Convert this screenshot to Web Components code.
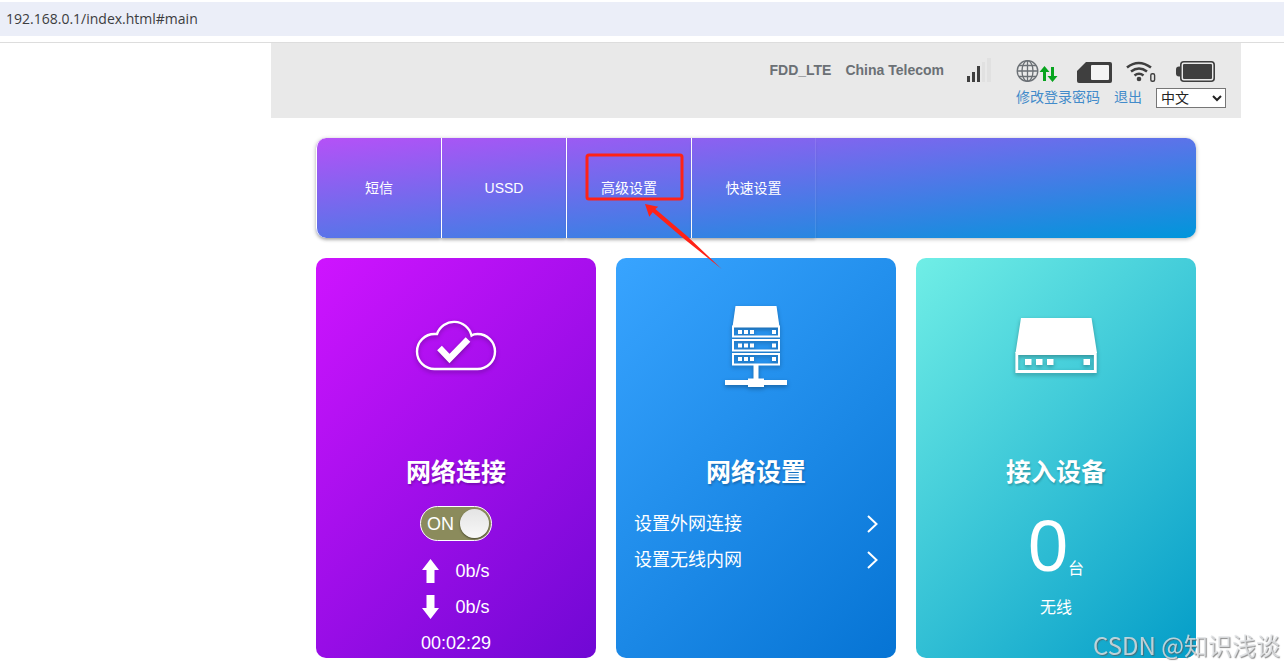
<!DOCTYPE html>
<html lang="zh-CN">
<head>
<meta charset="utf-8">
<title>4G Router</title>
<style>
  body {
    margin: 0;
    background: #fff;
    font-family: "Liberation Sans", "Noto Sans CJK SC", sans-serif;
    font-size: 14px;
  }

  main {
    max-width: 970px;
    margin: 0 43px 0 auto;
  }

  .content {
    display: flex;
    flex-direction: column;
    gap: 20px;
    padding: 20px 45px 0;
  }

  .cards {
    display: flex;
    gap: 20px;
  }
</style>
</head>
<body>
  <address-bar url="192.168.0.1/index.html#main"></address-bar>
  <main>
    <status-header network="FDD_LTE" provider="China Telecom"></status-header>
    <div class="content">
      <main-nav>
        <nav-tile href="#sms">短信</nav-tile>
        <nav-tile href="#ussd">USSD</nav-tile>
        <nav-tile href="#advanced" marked>高级设置</nav-tile>
        <nav-tile href="#quick">快速设置</nav-tile>
      </main-nav>
      <div class="cards">
        <home-card icon="cloud" style="--from: #cf14ff; --to: #7008d4">
          <span slot="title">网络连接</span>
          <connection-info up="0b/s" down="0b/s" time="00:02:29"></connection-info>
        </home-card>
        <home-card icon="server" style="--from: #38a4ff; --to: #0674d4">
          <span slot="title">网络设置</span>
          <card-link href="#dial">设置外网连接</card-link>
          <card-link href="#wifi">设置无线内网</card-link>
        </home-card>
        <home-card icon="device" style="--from: #70eee6; --to: #049dc8">
          <span slot="title">接入设备</span>
          <device-count count="0" unit="台">无线</device-count>
        </home-card>
      </div>
    </div>
  </main>
  <water-mark>CSDN @知识浅谈</water-mark>

<script>
const icons = {
  cloud: `
    <path d="M28.500 71a17.500 17.500 0 0 1 0-35h2.500a18 18 0 0 1 34.500 1.500q2-1.500 6-1.500a17.500 17.500 0 1 1 0 35z" fill="none" stroke="#fff" stroke-width="2.400"/>
    <path d="M33.500 50l10 10.500 18.500-19" fill="none" stroke="#fff" stroke-width="6.500"/>`,
  server: `
    <g transform="translate(-1 0)">
      <path d="M30.500 8h41l3 21H27.500z" fill="#fff"/>
      <g fill="none" stroke="#fff" stroke-width="2">
        <path d="M28 28.500h46v10H28zM28 42h46v10.500H28zM28 56h46v10.500H28z"/>
      </g>
      <g fill="#fff">
        <path d="M33 32h4v4h-4zM39 32h4v4h-4zM45 32h4v4h-4zM67 32h4v4h-4z"/>
        <path d="M33 45.500h4v4h-4zM39 45.500h4v4h-4zM45 45.500h4v4h-4zM67 45.500h4v4h-4z"/>
        <path d="M33 59h4v4h-4zM39 59h4v4h-4zM45 59h4v4h-4zM67 59h4v4h-4z"/>
        <path d="M48.500 67h5v14h-5zM20 82h62v5H20zM43 80.500h16v8.500H43z"/>
      </g>
    </g>`,
  device: `
    <path d="M15 20h70.500l5.500 35H9.500z" fill="#fff"/>
    <path d="M10.800 55.500h78.500v18H10.800z" fill="none" stroke="#fff" stroke-width="2.800"/>
    <path d="M19 61h6.500v6H19zM30 61h6.500v6H30zM41 61h6.500v6H41zM77.500 61h6.500v6h-6.500z" fill="#fff"/>`
}

window.customElements.define('address-bar', class extends HTMLElement {
  constructor() {
    super()
    this.attachShadow({mode:"open"})
    this.shadowRoot.innerHTML = `
      <style>
        :host {
          display: block;
          padding: 2px 0 6px;
          border-bottom: 1px solid #ddd;
        }

        input {
          display: block;
          box-sizing: border-box;
          width: 100%;
          height: 34px;
          margin: 0;
          padding: 0 6px 2px;
          border: 0;
          background: #ebeef8;
          color: #3c3d40;
          font: 14px "Open Sans", sans-serif;
        }
      </style>
      <input type="text" aria-label="URL">
    `
    this.shadowRoot.querySelector("input").value = this.getAttribute('url')
  }
})

window.customElements.define('status-header', class extends HTMLElement {
  constructor() {
    super()
    this.attachShadow({mode:"open"})
    this.shadowRoot.innerHTML = `
      <style>
        :host {
          display: flex;
          flex-direction: column;
          align-items: flex-end;
          gap: 5px;
          box-sizing: border-box;
          min-height: 75px;
          padding: 14px 15px 10px;
          background: #e9e9e9;
        }

        div {
          display: flex;
          gap: 14px;
          line-height: 18px;
        }

        .status {
          align-items: center;
          padding-right: 11px;
          color: #6b7075;
          font-weight: bold;
        }

        svg {
          display: block;
        }

        a {
          color: #428bca;
          text-decoration: none;
        }

        select {
          box-sizing: border-box;
          width: 70px;
          height: 20px;
          padding: 0;
          border: 1px solid #767676;
          background: #fff;
          color: #222;
          font: inherit;
        }
      </style>
      <div class="status">
        <span>${this.getAttribute('network')}</span>
        <span>${this.getAttribute('provider')}</span>
        <svg width="44" height="26" viewBox="0 0 44 26">
          <path d="M9 19h3v6H9zM14 15h3v10h-3zM19 9h3v16h-3z" fill="#3f3f3f"/>
          <path d="M24 5h3v20h-3zM29 1h4v24h-4z" fill="#e1e1e1"/>
        </svg>
        <svg width="47" height="26" viewBox="0 0 47 26">
          <g fill="none" stroke="#6b7075" stroke-width="1.300">
            <circle cx="11.500" cy="14" r="10.300"/>
            <ellipse cx="11.500" cy="14" rx="5.500" ry="10.300"/>
            <path d="M11.500 4v20M1 14h21M3 8.500h17M3 19.500h17"/>
          </g>
          <path d="M28.500 9l5 6h-3.500v9h-3v-9h-3.500zM36.500 25l-5-6h3.500v-9h3v9h3.500z" fill="#07a41e"/>
        </svg>
        <svg width="35" height="26" viewBox="0 0 35 26">
          <path d="M9 5h24q2 0 2 2v17q0 2-2 2H2q-2 0-2-2V14z" fill="#3f3f3f"/>
          <rect x="14" y="8" width="18" height="15" rx="1" fill="#f4f4f4"/>
        </svg>
        <svg width="36" height="26" viewBox="0 0 36 26">
          <g fill="none" stroke="#3f3f3f" stroke-width="2.600">
            <path d="M1 10.500q11.500-9 24 0M5 14.500q8-6 16 0M8.500 18.500q4.500-3.500 9 0"/>
          </g>
          <circle cx="13" cy="22" r="2.300" fill="#3f3f3f"/>
          <rect x="24.800" y="16.800" width="3.800" height="7.400" rx="1.500" fill="none" stroke="#3f3f3f" stroke-width="1.400"/>
        </svg>
        <svg width="39" height="26" viewBox="0 0 39 26">
          <rect x="4.800" y="4.800" width="33.400" height="19.400" rx="3" fill="none" stroke="#3f3f3f" stroke-width="1.600"/>
          <rect x="7" y="7" width="29" height="15" rx="1" fill="#3f3f3f"/>
          <path d="M4.500 9.500v10H3q-3 0-3-3v-4q0-3 3-3z" fill="#3f3f3f"/>
        </svg>
      </div>
      <div>
        <a href="#password">修改登录密码</a>
        <a href="#logout">退出</a>
        <select aria-label="语言"><option>中文</option></select>
      </div>
    `
  }
})

window.customElements.define('main-nav', class extends HTMLElement {
  constructor() {
    super()
    this.attachShadow({mode:"open"})
    this.shadowRoot.innerHTML = `
      <style>
        :host {
          display: block;
          border-radius: 10px;
          background: linear-gradient(to bottom right, #b551f7, #0096db);
          box-shadow: 0 1px 4px rgba(0, 0, 0, .3);
        }

        nav {
          display: flex;
        }
      </style>
      <nav><slot></slot></nav>
    `
  }
})

window.customElements.define('nav-tile', class extends HTMLElement {
  constructor() {
    super()
    this.attachShadow({mode:"open"})
    this.shadowRoot.innerHTML = `
      <style>
        :host {
          display: block;
          position: relative;
          box-sizing: border-box;
          width: 125px;
          border-left: 1px solid #fff;
          box-shadow: 0 3px 3px -1px rgba(0, 0, 0, .15);
        }

        :host(:first-child) {
          border-radius: 10px 0 0 10px;
        }

        :host(:last-child) a {
          border-right: 1px solid rgba(255, 255, 255, .1);
        }

        a {
          display: block;
          color: #fff;
          line-height: 100px;
          text-align: center;
          text-decoration: none;
        }

        svg {
          display: none;
          position: absolute;
          top: 12px;
          left: 16px;
          pointer-events: none;
        }

        :host([marked]) {
          z-index: 1;
        }

        :host([marked]) svg {
          display: block;
        }
      </style>
      <a href="${this.getAttribute('href')}"><slot></slot></a>
      <svg width="140" height="120" viewBox="0 0 140 120">
        <rect x="4" y="5" width="95" height="44" rx="2" fill="none" stroke="#ff2216" stroke-width="3"/>
        <path d="M62 54l13.300 2.700-3 2.300L104 86l34.700 33L100 88 69.700 62.300l-3.400 4.400z" fill="#ff2216"/>
      </svg>
    `
  }
})

window.customElements.define('home-card', class extends HTMLElement {
  constructor() {
    super()
    this.attachShadow({mode:"open"})
    this.shadowRoot.innerHTML = `
      <style>
        :host {
          display: flex;
          flex: 1;
          flex-direction: column;
          box-sizing: border-box;
          min-height: 400px;
          padding-top: 40px;
          border-radius: 10px;
          background: linear-gradient(135deg, var(--from), var(--to));
          color: #fff;
        }

        svg {
          align-self: center;
          filter: drop-shadow(0 2px 2px rgba(0, 0, 0, .3));
        }

        h2 {
          margin: 57px 0 17px;
          font-size: 25px;
          line-height: 34px;
          text-align: center;
          text-shadow: 1px 2px 2px rgba(0, 0, 0, .2);
        }
      </style>
      <svg width="100" height="100" viewBox="0 0 100 100">${icons[this.getAttribute('icon')]}</svg>
      <h2><slot name="title"></slot></h2>
      <slot></slot>
    `
  }
})

window.customElements.define('connection-info', class extends HTMLElement {
  constructor() {
    super()
    this.attachShadow({mode:"open"})
    this.shadowRoot.innerHTML = `
      <style>
        :host {
          display: flex;
          flex-direction: column;
          align-items: center;
          gap: 8px;
          font-size: 18px;
          line-height: 28px;
        }

        label {
          display: flex;
          align-items: center;
          justify-content: space-between;
          box-sizing: border-box;
          width: 72px;
          height: 35px;
          margin-bottom: 8px;
          padding: 0 2px 0 6px;
          border: 1px solid #fff;
          border-radius: 18px;
          background: #8b8b5c;
        }

        input {
          appearance: none;
          width: 29px;
          height: 29px;
          margin: 0;
          border-radius: 50%;
          background: linear-gradient(#e4e4e4, #f8f8f8);
          box-shadow: 0 1px 2px rgba(0, 0, 0, .5);
        }

        div {
          display: flex;
          align-items: center;
          gap: 15px;
        }
      </style>
      <label>ON<input type="checkbox" role="switch" checked></label>
      <div>
        <svg width="18" height="24" viewBox="0 0 18 24"><path d="M8.500 0L17 11h-4.500v13h-8V11H0z" fill="#fff"/></svg>
        <span>${this.getAttribute('up')}</span>
      </div>
      <div>
        <svg width="18" height="24" viewBox="0 0 18 24"><path d="M8.500 24L17 13h-4.500V0h-8v13H0z" fill="#fff"/></svg>
        <span>${this.getAttribute('down')}</span>
      </div>
      <span>${this.getAttribute('time')}</span>
    `
  }
})

window.customElements.define('card-link', class extends HTMLElement {
  constructor() {
    super()
    this.attachShadow({mode:"open"})
    this.shadowRoot.innerHTML = `
      <style>
        :host {
          display: block;
          padding: 0 18px;
        }

        a {
          display: flex;
          align-items: center;
          justify-content: space-between;
          color: #fff;
          font-size: 18px;
          line-height: 36px;
          text-decoration: none;
        }
      </style>
      <a href="${this.getAttribute('href')}">
        <slot></slot>
        <svg width="11" height="18" viewBox="0 0 11 18"><path d="M1 1l8.500 8L1 17" fill="none" stroke="#fff" stroke-width="2"/></svg>
      </a>
    `
  }
})

window.customElements.define('device-count', class extends HTMLElement {
  constructor() {
    super()
    this.attachShadow({mode:"open"})
    this.shadowRoot.innerHTML = `
      <style>
        :host {
          display: flex;
          flex-direction: column;
          align-items: center;
          gap: 8px;
          font-size: 16px;
          line-height: 28px;
        }

        div {
          display: flex;
          align-items: flex-end;
          line-height: 34px;
        }

        .count {
          font-size: 72px;
          line-height: 80px;
        }
      </style>
      <div>
        <span class="count">${this.getAttribute('count')}</span>
        <span>${this.getAttribute('unit')}</span>
      </div>
      <span><slot></slot></span>
    `
  }
})

window.customElements.define('water-mark', class extends HTMLElement {
  constructor() {
    super()
    this.attachShadow({mode:"open"})
    this.shadowRoot.innerHTML = `
      <style>
        :host {
          position: fixed;
          right: 4px;
          bottom: 6px;
          color: rgba(225, 228, 230, .8);
          font: 24px/36px "Noto Sans CJK SC", sans-serif;
          text-shadow: 1px 1px 1px rgba(90, 90, 90, .7);
          pointer-events: none;
        }
      </style>
      <slot></slot>
    `
  }
})
</script>
</body>
</html>
